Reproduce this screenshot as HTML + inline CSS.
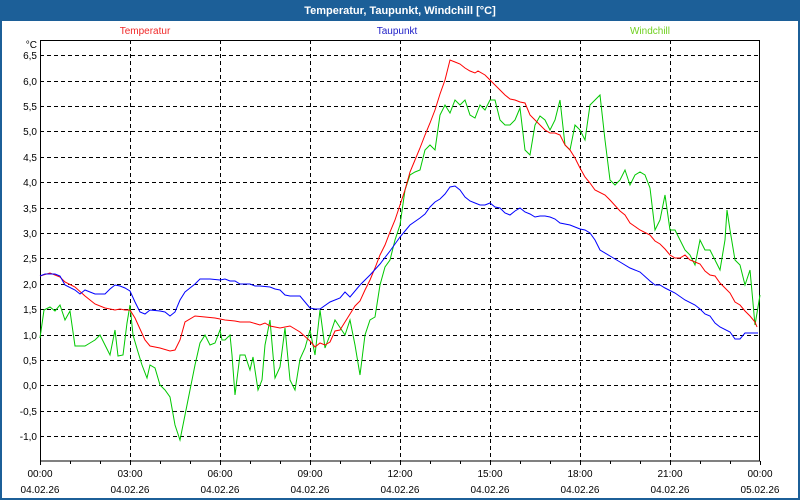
<!DOCTYPE html>
<html><head><meta charset="utf-8"><style>
html,body{margin:0;padding:0;background:#fff;}
svg{display:block;}
text{font-family:"Liberation Sans",sans-serif;font-size:10px;}
</style></head><body>
<svg width="800" height="500" viewBox="0 0 800 500" xmlns="http://www.w3.org/2000/svg">
<rect x="0" y="0" width="800" height="500" fill="#1c5f98"/>
<rect x="2" y="21" width="796" height="477" fill="#fff"/>
<text x="400" y="14" text-anchor="middle" fill="#fff" font-weight="bold" style="font-size:11px">Temperatur, Taupunkt, Windchill [°C]</text>
<text x="145" y="34" text-anchor="middle" fill="#f02828">Temperatur</text>
<text x="397" y="34" text-anchor="middle" fill="#2020c8">Taupunkt</text>
<text x="650" y="34" text-anchor="middle" fill="#70d020">Windchill</text>
<g stroke="#000" stroke-width="1" stroke-dasharray="4,3" fill="none">
<path d="M40 55.5H760M40 81.5H760M40 106.5H760M40 131.5H760M40 157.5H760M40 182.5H760M40 208.5H760M40 233.5H760M40 258.5H760M40 284.5H760M40 309.5H760M40 335.5H760M40 360.5H760M40 385.5H760M40 411.5H760M40 436.5H760"/>
<path d="M130.5 40V461M220.5 40V461M310.5 40V461M400.5 40V461M490.5 40V461M580.5 40V461M670.5 40V461"/>
</g>
<rect x="40.5" y="40.5" width="719" height="420.5" fill="none" stroke="#000"/>
<path d="M70.5 461v3M100.5 461v3M160.5 461v3M190.5 461v3M250.5 461v3M280.5 461v3M340.5 461v3M370.5 461v3M430.5 461v3M460.5 461v3M520.5 461v3M550.5 461v3M610.5 461v3M640.5 461v3M700.5 461v3M730.5 461v3M40.5 461v4M130.5 461v4M220.5 461v4M310.5 461v4M400.5 461v4M490.5 461v4M580.5 461v4M670.5 461v4M760.5 461v4" stroke="#000"/>
<g text-anchor="end" fill="#000">
<text x="37" y="48">°C</text>
<text x="37" y="59">6,5</text><text x="37" y="85">6,0</text><text x="37" y="110">5,5</text><text x="37" y="135">5,0</text><text x="37" y="161">4,5</text><text x="37" y="186">4,0</text><text x="37" y="212">3,5</text><text x="37" y="237">3,0</text><text x="37" y="262">2,5</text><text x="37" y="288">2,0</text><text x="37" y="313">1,5</text><text x="37" y="339">1,0</text><text x="37" y="364">0,5</text><text x="37" y="389">0,0</text><text x="37" y="415">-0,5</text><text x="37" y="440">-1,0</text>
</g>
<g text-anchor="middle" fill="#000">
<text x="40" y="477">00:00</text><text x="130" y="477">03:00</text><text x="220" y="477">06:00</text><text x="310" y="477">09:00</text><text x="400" y="477">12:00</text><text x="490" y="477">15:00</text><text x="580" y="477">18:00</text><text x="670" y="477">21:00</text><text x="760" y="477">00:00</text>
<text x="40" y="493">04.02.26</text><text x="130" y="493">04.02.26</text><text x="220" y="493">04.02.26</text><text x="310" y="493">04.02.26</text><text x="400" y="493">04.02.26</text><text x="490" y="493">04.02.26</text><text x="580" y="493">04.02.26</text><text x="670" y="493">04.02.26</text><text x="760" y="493">05.02.26</text>
</g>
<g fill="none" stroke-width="1">
<polyline stroke="#00c800" points="40,338 44,310 50,307 55,311 60,305 65,320 70,311 75,346 80,346 85,346 90,343 95,340 100,335 105,345 110,355 115,330 118,356 123,355 127,323 130,305 133,335 138,352 142,365 147,378 150,365 155,368 160,385 165,390 170,397 175,425 180,440 185,415 190,390 195,365 200,343 205,335 210,345 215,343 220,330 222,340 225,340 230,335 232,355 235,395 240,355 245,355 250,370 253,357 258,390 262,380 265,345 270,320 275,378 280,367 285,328 290,380 295,390 300,359 305,348 310,330 315,355 320,310 325,348 330,335 335,320 345,335 350,320 355,345 360,375 365,335 370,320 375,317 380,285 385,267 390,260 395,240 400,225 405,190 410,175 415,172 420,170 425,150 430,145 435,150 440,115 445,105 450,113 455,100 460,105 465,100 470,115 475,118 480,105 485,110 490,100 495,100 500,120 505,125 510,125 515,120 520,108 525,150 530,155 535,125 540,116 545,120 550,130 555,120 560,100 565,145 570,150 575,125 580,130 585,140 590,105 595,100 600,95 605,140 610,180 615,185 620,180 625,170 630,185 635,175 640,172 645,175 650,188 655,230 660,220 665,195 670,230 675,230 680,240 685,250 690,255 695,265 700,240 705,250 710,250 715,260 720,270 725,240 727,210 730,230 735,260 740,265 745,285 750,270 755,325 760,295"/>
<polyline stroke="#ff0000" points="40,276 50,273 60,277 65,282 75,287 85,296 95,304 105,308 115,310 120,309 125,310 130,310 135,318 140,329 145,340 150,346 160,348 170,351 175,350 180,340 185,322 195,316 205,317 215,318 225,320 235,321 240,322 250,322 260,325 265,323 270,326 280,328 290,326 300,332 310,341 315,347 320,343 325,345 330,342 335,331 340,330 345,322 350,314 355,306 360,301 365,290 370,280 375,268 380,255 385,245 390,232 395,220 400,205 405,190 410,172 415,160 420,148 425,135 430,123 435,110 440,94 445,80 450,60 455,62 460,64 465,68 470,71 475,73 478,71 485,75 490,80 500,90 505,95 510,99 515,100 520,102 525,103 530,115 535,120 540,125 545,130 550,133 555,133 560,135 565,145 570,150 575,158 580,168 585,177 590,183 595,190 605,195 610,200 620,211 625,215 630,223 640,230 650,235 655,241 660,244 665,249 670,255 675,258 680,258 685,255 690,260 695,262 700,264 705,271 710,275 715,276 720,283 725,288 730,293 735,302 740,305 745,311 750,316 755,322 757,327"/>
<polyline stroke="#0000ff" points="40,276 45,274 55,274 60,276 65,285 75,290 80,294 85,290 90,292 95,294 105,294 110,289 115,285 120,286 125,288 130,291 135,302 140,312 145,314 150,310 160,311 165,312 170,316 175,312 180,300 185,292 190,288 195,284 200,279 210,279 220,280 225,279 230,281 235,281 240,284 245,284 250,284 255,286 260,286 270,287 275,289 280,290 285,295 290,296 300,296 310,308 315,309 320,309 330,302 340,298 345,292 350,297 360,285 370,275 380,264 390,251 400,237 405,231 410,225 420,218 425,214 430,207 435,202 440,199 445,194 450,187 455,186 460,190 465,197 470,201 475,203 480,205 485,205 490,203 495,207 500,208 505,213 510,215 515,211 520,208 525,212 530,214 535,217 540,216 545,216 550,217 555,219 560,223 570,225 575,227 580,229 585,230 590,233 595,240 600,250 610,256 620,262 630,268 640,272 650,281 655,285 660,285 665,288 675,293 685,300 695,305 700,309 705,314 710,316 715,323 720,327 730,332 735,339 740,339 745,333 755,333 758,333"/>
</g>
</svg>
</body></html>
